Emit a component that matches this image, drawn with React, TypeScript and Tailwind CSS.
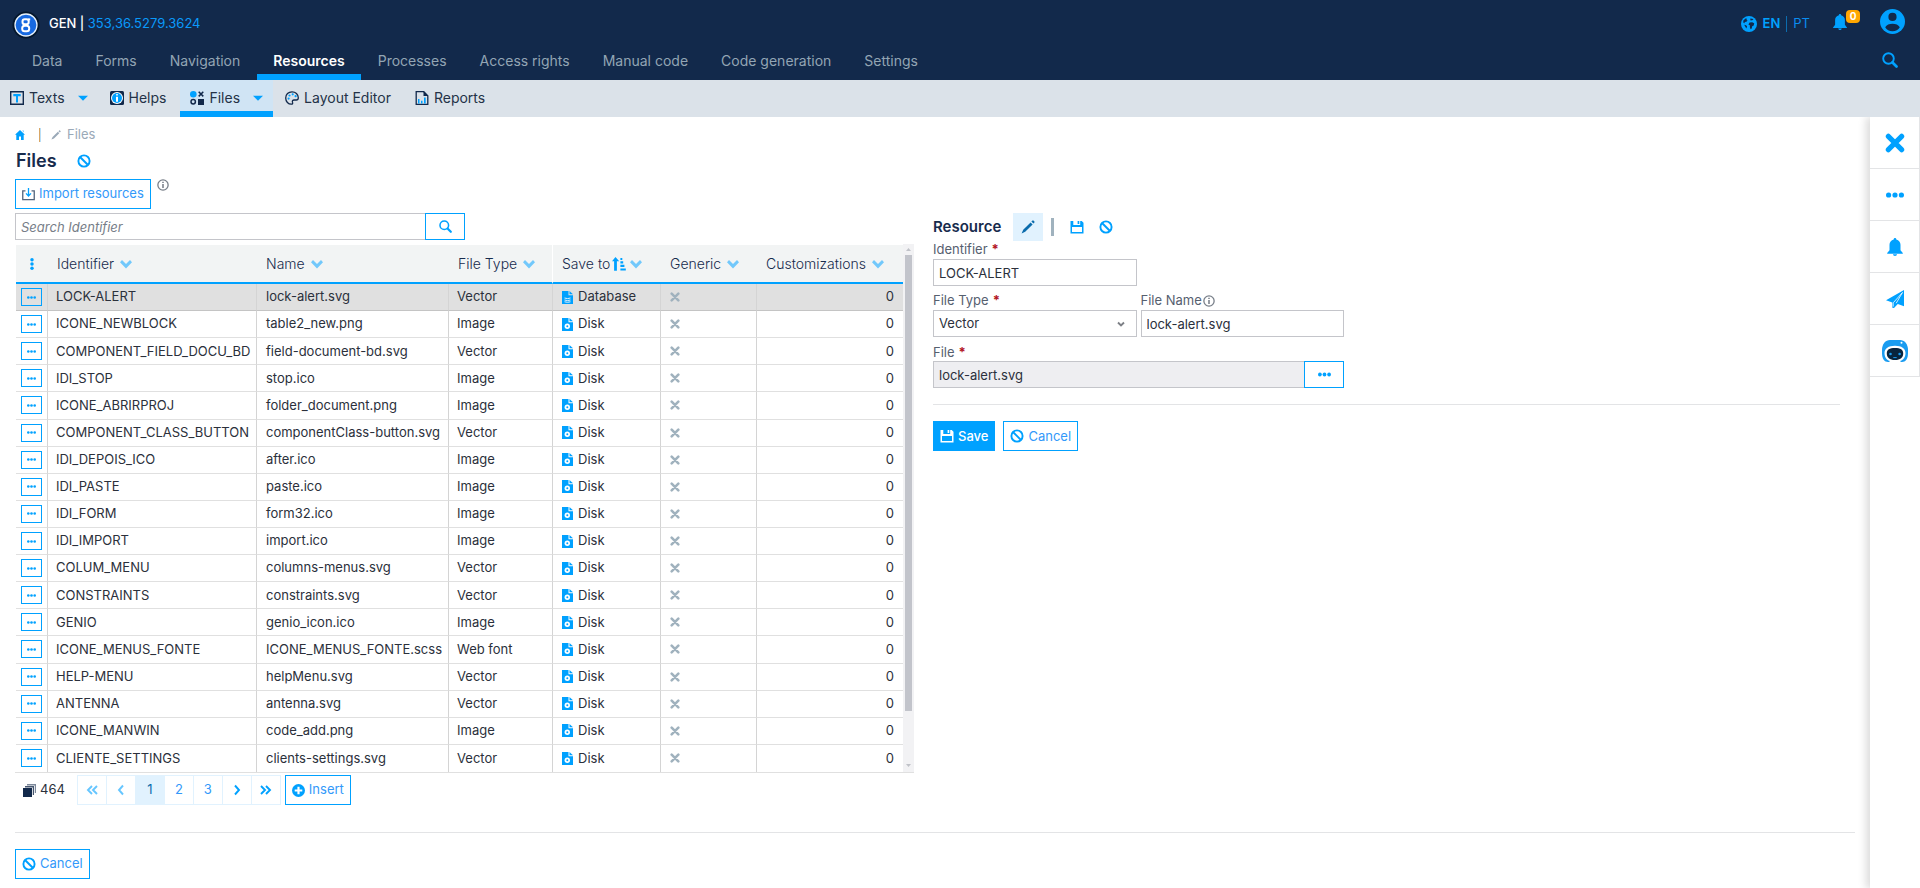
import { useState, type ReactNode } from "react";
import clsx from "clsx";

const MENU = ["Data", "Forms", "Navigation", "Resources", "Processes", "Access rights", "Manual code", "Code generation", "Settings"];

type Row = { id: string; name: string; type: string; disk: boolean };

const ROWS: Row[] = [
  { id: "LOCK-ALERT", name: "lock-alert.svg", type: "Vector", disk: false },
  { id: "ICONE_NEWBLOCK", name: "table2_new.png", type: "Image", disk: true },
  { id: "COMPONENT_FIELD_DOCU_BD", name: "field-document-bd.svg", type: "Vector", disk: true },
  { id: "IDI_STOP", name: "stop.ico", type: "Image", disk: true },
  { id: "ICONE_ABRIRPROJ", name: "folder_document.png", type: "Image", disk: true },
  { id: "COMPONENT_CLASS_BUTTON", name: "componentClass-button.svg", type: "Vector", disk: true },
  { id: "IDI_DEPOIS_ICO", name: "after.ico", type: "Image", disk: true },
  { id: "IDI_PASTE", name: "paste.ico", type: "Image", disk: true },
  { id: "IDI_FORM", name: "form32.ico", type: "Image", disk: true },
  { id: "IDI_IMPORT", name: "import.ico", type: "Image", disk: true },
  { id: "COLUM_MENU", name: "columns-menus.svg", type: "Vector", disk: true },
  { id: "CONSTRAINTS", name: "constraints.svg", type: "Vector", disk: true },
  { id: "GENIO", name: "genio_icon.ico", type: "Image", disk: true },
  { id: "ICONE_MENUS_FONTE", name: "ICONE_MENUS_FONTE.scss", type: "Web font", disk: true },
  { id: "HELP-MENU", name: "helpMenu.svg", type: "Vector", disk: true },
  { id: "ANTENNA", name: "antenna.svg", type: "Vector", disk: true },
  { id: "ICONE_MANWIN", name: "code_add.png", type: "Image", disk: true },
  { id: "CLIENTE_SETTINGS", name: "clients-settings.svg", type: "Vector", disk: true },
];

const COLUMNS = ["Identifier", "Name", "File Type", "Save to", "Generic", "Customizations"];

type IconProps = { className?: string };

function Svg({ className = "size-3.5", box = 14, children }: IconProps & { box?: number; children: ReactNode }) {
  return (
    <svg viewBox={`0 0 ${box} ${box}`} className={clsx("shrink-0", className)} fill="currentColor" aria-hidden="true">
      {children}
    </svg>
  );
}

function Logo() {
  return (
    <svg viewBox="0 0 28 28" className="size-7 shrink-0" aria-hidden="true">
      <circle cx="14" cy="14" r="13.5" fill="#04162b" />
      <circle cx="14" cy="14" r="11" fill="#1769e0" stroke="#e6f1fb" strokeWidth="1.3" />
      <g fill="none" stroke="#fff" strokeWidth="2">
        <rect x="10.500" y="8.200" width="6.200" height="5" rx="2.200" />
        <rect x="10.200" y="14.800" width="7" height="5.400" rx="2.500" />
        <path d="M15.8 8.400h2.400" />
        <path d="M11.800 12.800v2.400" />
      </g>
    </svg>
  );
}

function Ban({ className }: IconProps) {
  return (
    <Svg className={className}>
      <circle cx="7" cy="7" r="5.6" fill="none" stroke="currentColor" strokeWidth="1.9" />
      <path d="M3 3l8 8" stroke="currentColor" strokeWidth="1.9" />
    </Svg>
  );
}

function Floppy({ className }: IconProps) {
  return (
    <Svg className={className}>
      <path fillRule="evenodd" d="M.5 1h2.800v4h6.900V1h1.500l1.800 1.800v10.700H.5zM2 7v5h10V7zM7.600 1h1.700v3H7.600z" />
    </Svg>
  );
}

function Pencil({ className }: IconProps) {
  return (
    <Svg className={className}>
      <path d="M9.600 2.400l2 2-7.400 7.400L.6 13.400 2.200 9.800zM10.400 1.600l1-1c.3-.3.8-.3 1.100 0l.9.9c.3.3.3.8 0 1.100l-1 1z" />
    </Svg>
  );
}

function Dots({ className }: IconProps) {
  return (
    <Svg className={className} box={18}>
      <circle cx="2.6" cy="9" r="2.6" />
      <circle cx="9" cy="9" r="2.6" />
      <circle cx="15.4" cy="9" r="2.6" />
    </Svg>
  );
}

function Bell({ className }: IconProps) {
  return (
    <Svg className={className} box={18}>
      <path d="M9 0c.8 0 1.3.6 1.3 1.4 2.6.6 4.2 2.6 4.2 5.4v5.4l2.3 2.9v.6H1.200v-.6l2.300-2.900V6.800c0-2.800 1.600-4.800 4.200-5.400C7.700.6 8.200 0 9 0zM7 16.300h4c0 1-.9 1.700-2 1.700s-2-.7-2-1.700z" />
    </Svg>
  );
}

function Search({ className }: IconProps) {
  return (
    <Svg className={className} box={16}>
      <circle cx="6.500" cy="6.500" r="5.300" fill="none" stroke="currentColor" strokeWidth="1.900" />
      <path d="M10.500 10.500l4 4" stroke="currentColor" strokeWidth="2.700" strokeLinecap="round" />
    </Svg>
  );
}

function Info({ className }: IconProps) {
  return (
    <Svg className={className}>
      <circle cx="7" cy="7" r="6" fill="none" stroke="currentColor" strokeWidth="1.500" />
      <path d="M6.100 3.200h1.800v1.600H6.100zM6.100 5.800h1.800v4.800H6.100z" />
    </Svg>
  );
}

function Caret() {
  return (
    <Svg className="size-2.5 text-[#00a1ff]" box={10}>
      <path d="M0 2.800h10L5 7.800z" />
    </Svg>
  );
}

function Chevron() {
  return (
    <Svg className="size-3 text-[#72c8fb]" box={12}>
      <path d="M2 2L0 4.200l6 6.200 6-6.200L10 2 6 6z" />
    </Svg>
  );
}

function SortIcon() {
  return (
    <Svg className="size-3.5 text-[#00a1ff]">
      <path d="M3.500 0L7.200 4.300H4.900V13.700H2.100V4.300H0zM8.400 1h1.900v1.900H8.400zM8.400 4.300h2.800v2.100H8.400zM8.400 7.800h4v2.100h-4zM8.400 11.400h5.400v2.100H8.400z" />
    </Svg>
  );
}

function FileIcon({ disk }: { disk: boolean }) {
  return (
    <svg viewBox="0 0 11 13" className="h-3.25 w-2.75 shrink-0" fill="#00a1ff" aria-hidden="true">
      <path d="M0 0h6.500v4.300H11V13H0z" />
      <path d="M7.500 0L11 3.300H7.500z" />
      {disk ? (
        <>
          <circle cx="5.300" cy="8.300" r="2.700" fill="#fff" />
          <circle cx="5.300" cy="8.300" r="1" />
        </>
      ) : (
        <g fill="none" stroke="#e0f2fd" strokeWidth="1">
          <path d="M2.500 7q3 1.200 6 0M2.500 9q3 1.200 6 0M2.500 10.800q3 1 6 0" />
        </g>
      )}
    </svg>
  );
}

function Cross({ className }: IconProps) {
  return (
    <Svg className={className} box={18}>
      <path d="M3 3l12 12M15 3L3 15" stroke="currentColor" strokeWidth="4.600" strokeLinecap="round" />
    </Svg>
  );
}

function Globe() {
  return (
    <Svg className="size-4 text-[#00a1ff]" box={16}>
      <circle cx="8" cy="8" r="8" />
      <path fill="#12294b" d="M2.200 4.800l2.200-2.300 1.700.2-.7 1.200 1.200.5-1.200 1.300-1.600.4-.3 1.200L2.400 6.800zM9.200 2.600l2.200.1 1.100 1.100-1.400.5-1.600.2zM8.600 6.400l2.600-.2 2 1.100-.5 2.200-1.500.8-.5 2.200-1.100.8-.8-2.300.2-1.500-1.600-1zM3.200 8.800l1.900.5 1 1.300-.8 2z" />
    </Svg>
  );
}

function User() {
  return (
    <Svg className="size-6.25 text-[#00a1ff]" box={25}>
      <circle cx="12.500" cy="12.500" r="12.500" />
      <circle cx="12.500" cy="7.900" r="4.100" fill="#12294b" />
      <path fill="#12294b" d="M5.200 18.200c1.300-2.400 4.100-3.500 7.300-3.500s6 1.100 7.300 3.500c-1.500 2.500-4.100 4-7.300 4s-5.800-1.500-7.300-4z" />
    </Svg>
  );
}

function Plane() {
  return (
    <Svg className="size-4.5" box={18}>
      <path d="M18 0v16.300l-6.200-2.400L8 18l-1.700-.2v-5.400L0 10.200z" />
      <path d="M16.500 2.500L7.200 12.800v3.800M16.500 2.500l-6.300 10.700" fill="none" stroke="#fff" strokeWidth=".8" />
    </Svg>
  );
}

function Robot() {
  return (
    <svg viewBox="0 0 26 24" className="h-6 w-6.5" aria-hidden="true">
      <path fill="#1a9cf0" d="M8 1h10c4.500 0 8 4 8 10v3.500c0 5-2.500 8.500-6 8.500H6c-3.500 0-6-3.500-6-8.500V11C0 5 3.500 1 8 1z" />
      <path fill="#fff" d="M2.500 14C2.500 9.500 6.500 6.700 13 6.700S23.500 9.500 23.500 14c0 4-2 7-5 7.800V24h-11v-2.200c-3-.8-5-3.800-5-7.800z" />
      <path fill="#08243d" d="M4.800 14.500c0-4 2.700-5.500 8.200-5.500s8.200 1.500 8.200 5.500-2.700 6.500-8.200 6.500-8.200-2.500-8.200-6.500z" />
      <circle cx="8.500" cy="15" r="1.300" fill="#1a9cf0" />
      <circle cx="17.600" cy="15" r="1.300" fill="#1a9cf0" />
      <path d="M11.300 18.600h3.400" stroke="#1a9cf0" />
      <circle cx="19.500" cy="3.800" r="1" fill="#fff" />
    </svg>
  );
}

function TextsIcon() {
  return (
    <Svg>
      <path d="M.7.700h12.600v12.600H.7z" fill="none" stroke="#12294b" strokeWidth="1.400" />
      <path d="M3.300 3h7.400v2.200H8V11.500H6V5.200H3.300z" fill="#00a1ff" />
    </Svg>
  );
}

function HelpsIcon() {
  return (
    <Svg>
      <path d="M0 1.500Q0 0 1.500 0h11Q14 0 14 1.500v11q0 1.500-1.500 1.500h-11Q0 14 0 12.500z" fill="#12294b" />
      <circle cx="7" cy="7" r="6" fill="#fff" />
      <circle cx="7" cy="7" r="5" fill="#00a1ff" />
      <path d="M6.200 3h1.600v1.500H6.200zM6 5.700h2v5H6z" fill="#fff" />
    </Svg>
  );
}

function FilesIcon() {
  return (
    <Svg>
      <circle cx="3.300" cy="3.300" r="3.300" fill="#00a1ff" />
      <path d="M8.700.8l4.600 4.600M13.300.8L8.700 5.400" stroke="#12294b" strokeWidth="1.500" />
      <circle cx="3.200" cy="10.800" r="2.200" fill="none" stroke="#12294b" strokeWidth="1.500" />
      <path d="M8 8h6v6H8z" fill="#12294b" />
    </Svg>
  );
}

function PaletteIcon() {
  return (
    <Svg>
      <path d="M7 .8C3.400.8.700 3.400.700 7s2.600 6.200 5.600 6.200c1.400 0 1.600-.9 1.200-1.900-.5-1.400.2-2.300 1.600-2.300h2.200c1.300 0 2-.8 2-2.200C13.300 3.200 10.500.8 7 .8z" fill="none" stroke="#12294b" strokeWidth="1.300" />
      <g fill="#00a1ff">
        <circle cx="3.600" cy="7.600" r="1.100" />
        <circle cx="4.500" cy="4.500" r="1.100" />
        <circle cx="7.700" cy="3.300" r="1.100" />
        <circle cx="10.600" cy="5.200" r="1.100" />
      </g>
    </Svg>
  );
}

function ReportsIcon() {
  return (
    <Svg>
      <path d="M1.200.7h7.600l4 4v8.600H1.200z" fill="none" stroke="#12294b" strokeWidth="1.300" />
      <path d="M8.500.5v4.500H13z" fill="#12294b" />
      <path d="M3 8h1.500v4.500H3zM6 9.800h1.500v2.700H6zM9 6.500h1.700v6H9z" fill="#00a1ff" />
    </Svg>
  );
}

function ImportIcon() {
  return (
    <svg viewBox="0 0 12 12" className="size-3.25 shrink-0" fill="none" aria-hidden="true">
      <path d="M3.200 2.600H.7v8.200h10.600V2.600H8.800" stroke="#52647d" strokeWidth="1.200" />
      <path d="M6 0v7M3.700 5L6 7.400 8.300 5" stroke="#00a1ff" strokeWidth="1.200" />
    </svg>
  );
}

const SUBMENU = [
  { label: "Texts", icon: <TextsIcon />, caret: true },
  { label: "Helps", icon: <HelpsIcon />, caret: false },
  { label: "Files", icon: <FilesIcon />, caret: true },
  { label: "Layout Editor", icon: <PaletteIcon />, caret: false },
  { label: "Reports", icon: <ReportsIcon />, caret: false },
];

function Header() {
  return (
    <header className="bg-[#12294b]">
      <div className="flex h-11 items-start justify-between pr-[15px] pl-3">
        <div className="flex items-start gap-[9px] pt-[11px]">
          <Logo />
          <p className="text-[13px] leading-6 text-white">
            <span className="font-medium">GEN&nbsp;|&nbsp;</span>
            <a href="#version" className="text-[#0a99fa]">353,36.5279.3624</a>
          </p>
        </div>
        <div className="flex items-start text-[#00a1ff]">
          <div className="mt-3 flex h-6 items-center gap-1.5 text-[13px]">
            <Globe />
            <button className="font-semibold">EN</button>
            <span className="h-4 w-px bg-[#0c6cae]" />
            <button className="text-[#0a8cf0]">PT</button>
          </div>
          <button aria-label="Notifications" className="relative mt-3.5 ml-[22px] size-4">
            <Bell className="size-4" />
            <span className="absolute -top-1 left-3.5 h-[13px] w-3.5 rounded bg-[#ffa600] text-[10px] leading-[13px] font-bold text-white">0</span>
          </button>
          <button aria-label="User" className="mt-[9px] ml-8">
            <User />
          </button>
        </div>
      </div>
      <div className="flex h-9 items-stretch justify-between pr-[22px] pl-4">
        <nav className="flex gap-px">
          {MENU.map((m) => (
            <a
              key={m}
              href="#menu"
              className={clsx(
                "border-b-6 px-4 text-[14px] leading-[34px]",
                m === "Resources" ? "border-[#00a1ff] font-semibold text-white" : "border-transparent text-[#93a5b4]"
              )}
            >
              {m}
            </a>
          ))}
        </nav>
        <button aria-label="Search menu" className="mb-1 text-[#00a1ff]">
          <Search className="size-4" />
        </button>
      </div>
    </header>
  );
}

function SubMenu() {
  return (
    <nav className="flex h-[37px] gap-0.5 bg-[#dbe2e9] text-[14px] text-[#243247]">
      {SUBMENU.map((s) => (
        <a
          key={s.label}
          href="#submenu"
          className={clsx(
            "flex items-center gap-[5px] border-b-6 px-2.5 pt-1",
            s.label === "Files" ? "border-[#00a1ff] bg-[#d0e4f4]" : "border-transparent"
          )}
        >
          {s.icon}
          <span className={s.caret ? "mr-2" : "mr-0.5"}>{s.label}</span>
          {s.caret && <Caret />}
        </a>
      ))}
    </nav>
  );
}

function OutlineButton({ icon, children }: { icon: ReactNode; children: ReactNode }) {
  return (
    <button className="flex h-[30px] items-center gap-1 border border-[#00a1ff] px-1.5 text-[13px] text-[#3399fa]">
      {icon}
      {children}
    </button>
  );
}

function FilesTable() {
  return (
    <div className="flex border-b border-[#e0e0e0]">
      <table className="ml-px h-[527px] flex-1 table-fixed border-separate border-spacing-0 text-left text-[13px] text-[#2b303b]">
        <colgroup>
          <col className="w-8" />
          <col className="w-[209px]" />
          <col className="w-48" />
          <col className="w-26" />
          <col className="w-27" />
          <col className="w-24" />
          <col />
        </colgroup>
        <thead>
          <tr className="h-[39px] bg-[#f2f4f4] text-[14px] text-[#172b4d]">
            <th className="border-b-2 border-[#00a1ff] text-[#00a1ff]">
              <button aria-label="Columns" className="block w-full">
                <Dots className="mx-auto size-3 rotate-90" />
              </button>
            </th>
            {COLUMNS.map((c) => (
              <th
                key={c}
                className={clsx("border-b-2 border-b-[#00a1ff] pl-[9px] font-light", c === "File Type" && "border-r border-r-white")}
              >
                <span className="flex items-center whitespace-nowrap">
                  {c}
                  {c === "Save to" && <span className="ml-0.5"><SortIcon /></span>}
                  <span className={c === "Save to" ? "ml-1" : "ml-1.5"}><Chevron /></span>
                </span>
              </th>
            ))}
          </tr>
        </thead>
        <tbody>
          {ROWS.map((r, i) => {
            const line = i === 0 ? "border-b border-b-[#c4c4c4]" : i < ROWS.length - 1 ? "border-b border-b-[#e0e0e0]" : "";
            const cell = clsx(line, "border-r border-r-[#d4d4d4]");
            return (
              <tr key={r.id} className={clsx("h-[27px]", i === 0 && "bg-[#e0e0e0]")}>
                <td className={clsx(cell, "pl-[5px]")}>
                  <button aria-label={`Actions for ${r.id}`} className="flex h-[18px] w-[21px] items-center justify-center border border-[#00a1ff] text-[#00a1ff]">
                    <Dots className="size-[9px]" />
                  </button>
                </td>
                <td className={clsx(cell, "pl-2 whitespace-nowrap")}>{r.id}</td>
                <td className={clsx(cell, "pl-[9px] whitespace-nowrap")}>{r.name}</td>
                <td className={clsx(cell, "pl-2")}>{r.type}</td>
                <td className={clsx(cell, "pl-[9px]")}>
                  <span className="flex items-center gap-[5px]">
                    <FileIcon disk={r.disk} />
                    {r.disk ? "Disk" : "Database"}
                  </span>
                </td>
                <td className={clsx(cell, "pl-[9px] text-[#a0b2be]")}>
                  <Cross className="size-2.5" />
                </td>
                <td className={clsx(line, "pr-[9px] text-right")}>0</td>
              </tr>
            );
          })}
        </tbody>
      </table>
      <div className="-mt-px flex w-[11px] flex-col items-center bg-[#f2f2f4] text-[#c0c2c8]">
        <Svg className="my-[3px] size-[5px]" box={5}><path d="M0 4h5L2.500 1z" /></Svg>
        <div className="mb-auto h-[456px] w-[7px] bg-[#c2c4cb]" />
        <Svg className="my-1 size-[5px]" box={5}><path d="M0 1h5L2.500 4z" /></Svg>
      </div>
    </div>
  );
}

function PageArrow({ d, faded }: { d: string; faded?: boolean }) {
  return (
    <svg viewBox="0 0 12 12" className={clsx("mx-auto size-3", faded && "opacity-60")} fill="none" stroke="#00a1ff" strokeWidth="1.900" aria-hidden="true">
      <path d={d} />
    </svg>
  );
}

function Pagination({ page, setPage }: { page: number; setPage: (p: number) => void }) {
  const cell = "h-7 w-[29px] border-l border-[#e1f2fe] text-center text-[13px]";
  return (
    <div className="mt-0.5 flex items-center">
      <svg viewBox="0 0 13 13" className="ml-2 size-3.25" aria-hidden="true">
        <path d="M4 0h9v9h-1.200V1.500H4z" fill="#7d899b" />
        <path d="M2 2h9v9H9.800V3.500H2z" fill="#46566f" />
        <path d="M0 4h9v9H0z" fill="#12294b" />
      </svg>
      <span className="ml-1 text-[13px] text-[#2b303b]">464</span>
      <div className="ml-3 flex border-y border-r border-[#e1f2fe]">
        <button aria-label="First" className={cell}><PageArrow faded d="M6 2L2 6l4 4M11 2L7 6l4 4" /></button>
        <button aria-label="Previous" className={cell}><PageArrow faded d="M8 1.500L4 6l4 4.500" /></button>
        {[1, 2, 3].map((n) => (
          <button key={n} onClick={() => setPage(n)} className={clsx(cell, n === page ? "bg-[#e1f2fe] text-[#0b6cac]" : "text-[#3399fa]")}>
            {n}
          </button>
        ))}
        <button aria-label="Next" className={cell}><PageArrow d="M4 1.500L8 6l-4 4.500" /></button>
        <button aria-label="Last" className={cell}><PageArrow d="M1 2l4 4-4 4M6 2l4 4-4 4" /></button>
      </div>
      <div className="ml-1">
        <OutlineButton
          icon={
            <Svg className="size-3.25 text-[#00a1ff]" box={12}>
              <circle cx="6" cy="6" r="6" />
              <path d="M6 2.500v7M2.500 6h7" stroke="#fff" strokeWidth="2" />
            </Svg>
          }
        >
          Insert
        </OutlineButton>
      </div>
    </div>
  );
}

const inputClass = "h-[27px] w-full border border-[#c4c5ca] px-[5px] text-[13px] text-[#2b303b]";

function Label({ htmlFor, required, children }: { htmlFor: string; required?: boolean; children: ReactNode }) {
  return (
    <label htmlFor={htmlFor} className="flex h-[18px] items-center text-[13px] text-[#56606f]">
      {children}
      {required && <span className="ml-1 font-bold text-[#b3161f]">*</span>}
    </label>
  );
}

function ResourceForm() {
  return (
    <section className="min-w-0 flex-1 pr-[15px]">
      <div className="flex h-7 items-center">
        <h2 className="text-[15px] font-semibold text-[#172b4d]">Resource</h2>
        <button aria-label="Edit" className="ml-3 flex h-7 w-[30px] items-center justify-center bg-[#e1f2fe] text-[#0b6cac]">
          <Pencil />
        </button>
        <span className="ml-2 h-[18px] w-[3px] bg-[#a0b2be]" />
        <button aria-label="Save" className="ml-4 text-[#00a1ff]"><Floppy /></button>
        <button aria-label="Cancel" className="ml-[15px] text-[#00a1ff]"><Ban /></button>
      </div>
      <form className="flex max-w-[411px] flex-col gap-1.5">
        <div className="w-51">
          <Label htmlFor="identifier" required>Identifier</Label>
          <input id="identifier" defaultValue="LOCK-ALERT" className={inputClass} />
        </div>
        <div className="flex gap-1">
          <div className="flex-1">
            <Label htmlFor="fileType" required>File Type</Label>
            <div className="relative">
              <select id="fileType" className={clsx(inputClass, "appearance-none bg-white")}>
                <option>Vector</option>
                <option>Image</option>
                <option>Web font</option>
              </select>
              <svg viewBox="0 0 8 8" className="pointer-events-none absolute top-2.5 right-3 size-2" fill="none" stroke="#7d8086" strokeWidth="1.900" aria-hidden="true">
                <path d="M1 2.500l3 3 3-3" />
              </svg>
            </div>
          </div>
          <div className="flex-1">
            <Label htmlFor="fileName">
              File Name
              <Info className="ml-px size-3 text-[#777e88]" />
            </Label>
            <input id="fileName" defaultValue="lock-alert.svg" className={inputClass} />
          </div>
        </div>
        <div>
          <Label htmlFor="file" required>File</Label>
          <div className="flex">
            <input id="file" readOnly value="lock-alert.svg" className={clsx(inputClass, "border-r-0 bg-[#eeeef1]")} />
            <button type="button" aria-label="Choose file" className="flex h-[27px] w-10 shrink-0 items-center justify-center border border-[#00a1ff] text-[#00a1ff]">
              <Dots className="size-3.25" />
            </button>
          </div>
        </div>
      </form>
      <hr className="mt-4 border-[#e3e4e6]" />
      <div className="mt-4 flex gap-2">
        <button className="flex h-[30px] items-center gap-1 bg-[#00a1ff] px-[7px] text-[13px] font-medium text-white">
          <Floppy />
          Save
        </button>
        <OutlineButton icon={<Ban className="size-3.5 text-[#00a1ff]" />}>Cancel</OutlineButton>
      </div>
    </section>
  );
}

const SIDE_ITEMS = [
  { label: "Close", icon: <Cross className="size-5" /> },
  { label: "More", icon: <Dots className="size-4.5" /> },
  { label: "Alerts", icon: <Bell className="size-4.5" /> },
  { label: "Send", icon: <Plane /> },
  { label: "Assistant", icon: <Robot /> },
];

export default function App() {
  const [page, setPage] = useState(1);

  return (
    <div className="flex min-h-screen flex-col bg-white font-['Inter',sans-serif]">
      <Header />
      <SubMenu />
      <div className="flex flex-1">
        <main className="min-w-0 flex-1 pr-[15px] pb-2.5 pl-[15px]">
          <div className="flex h-[34px] items-center pt-0.5 text-[13px] text-[#9aa9b8]">
            <a href="#home" aria-label="Home" className="text-[#00a1ff]">
              <Svg className="size-2.5" box={10}><path d="M5 0l5 4.800H8.700V10H6V6.500H4V10H1.300V4.800H0zM7.500.500h1v2z" /></Svg>
            </a>
            <span className="ml-3.5 h-3.5 w-0.5 border-l border-[#d9a766] bg-[#b9dff8]" />
            <Pencil className="ml-2.5 size-2.5" />
            <span className="ml-1.5">Files</span>
          </div>
          <div className="flex h-5 items-center gap-5 pl-px">
            <h1 className="text-lg font-semibold text-[#172b4d]">Files</h1>
            <Ban className="size-3.5 text-[#00a1ff]" />
          </div>
          <div className="mt-2 flex items-start gap-1.5">
            <OutlineButton icon={<ImportIcon />}>Import resources</OutlineButton>
            <Info className="size-3 text-[#777e88]" />
          </div>
          <div className="mt-1 flex">
            <div className="w-[899px] shrink-0">
              <div className="mb-[5px] flex w-[450px]">
                <input aria-label="Search" placeholder="Search Identifier" className="h-[27px] flex-1 border border-r-0 border-[#c4c5ca] px-[5px] text-[13px] italic placeholder:text-[#777e88]" />
                <button aria-label="Search" className="flex w-10 items-center justify-center border border-[#00a1ff] text-[#00a1ff]">
                  <Search className="size-3.25" />
                </button>
              </div>
              <FilesTable />
              <Pagination page={page} setPage={setPage} />
            </div>
            <div className="ml-[19px] flex min-w-0 flex-1">
              <ResourceForm />
            </div>
          </div>
          <hr className="mt-[27px] mb-4 border-[#e3e4e6]" />
          <OutlineButton icon={<Ban className="size-3.5 text-[#00a1ff]" />}>Cancel</OutlineButton>
        </main>
        <aside className="w-[50px] shrink-0 bg-white text-[#00a1ff] shadow-[-4px_0_8px_rgba(0,0,0,0.14)] [clip-path:inset(0_0_0_-20px)]">
          {SIDE_ITEMS.map((s) => (
            <button key={s.label} aria-label={s.label} className="flex h-13 w-full items-center justify-center border-r border-b border-[#e3e4e6]">
              {s.icon}
            </button>
          ))}
        </aside>
      </div>
    </div>
  );
}
